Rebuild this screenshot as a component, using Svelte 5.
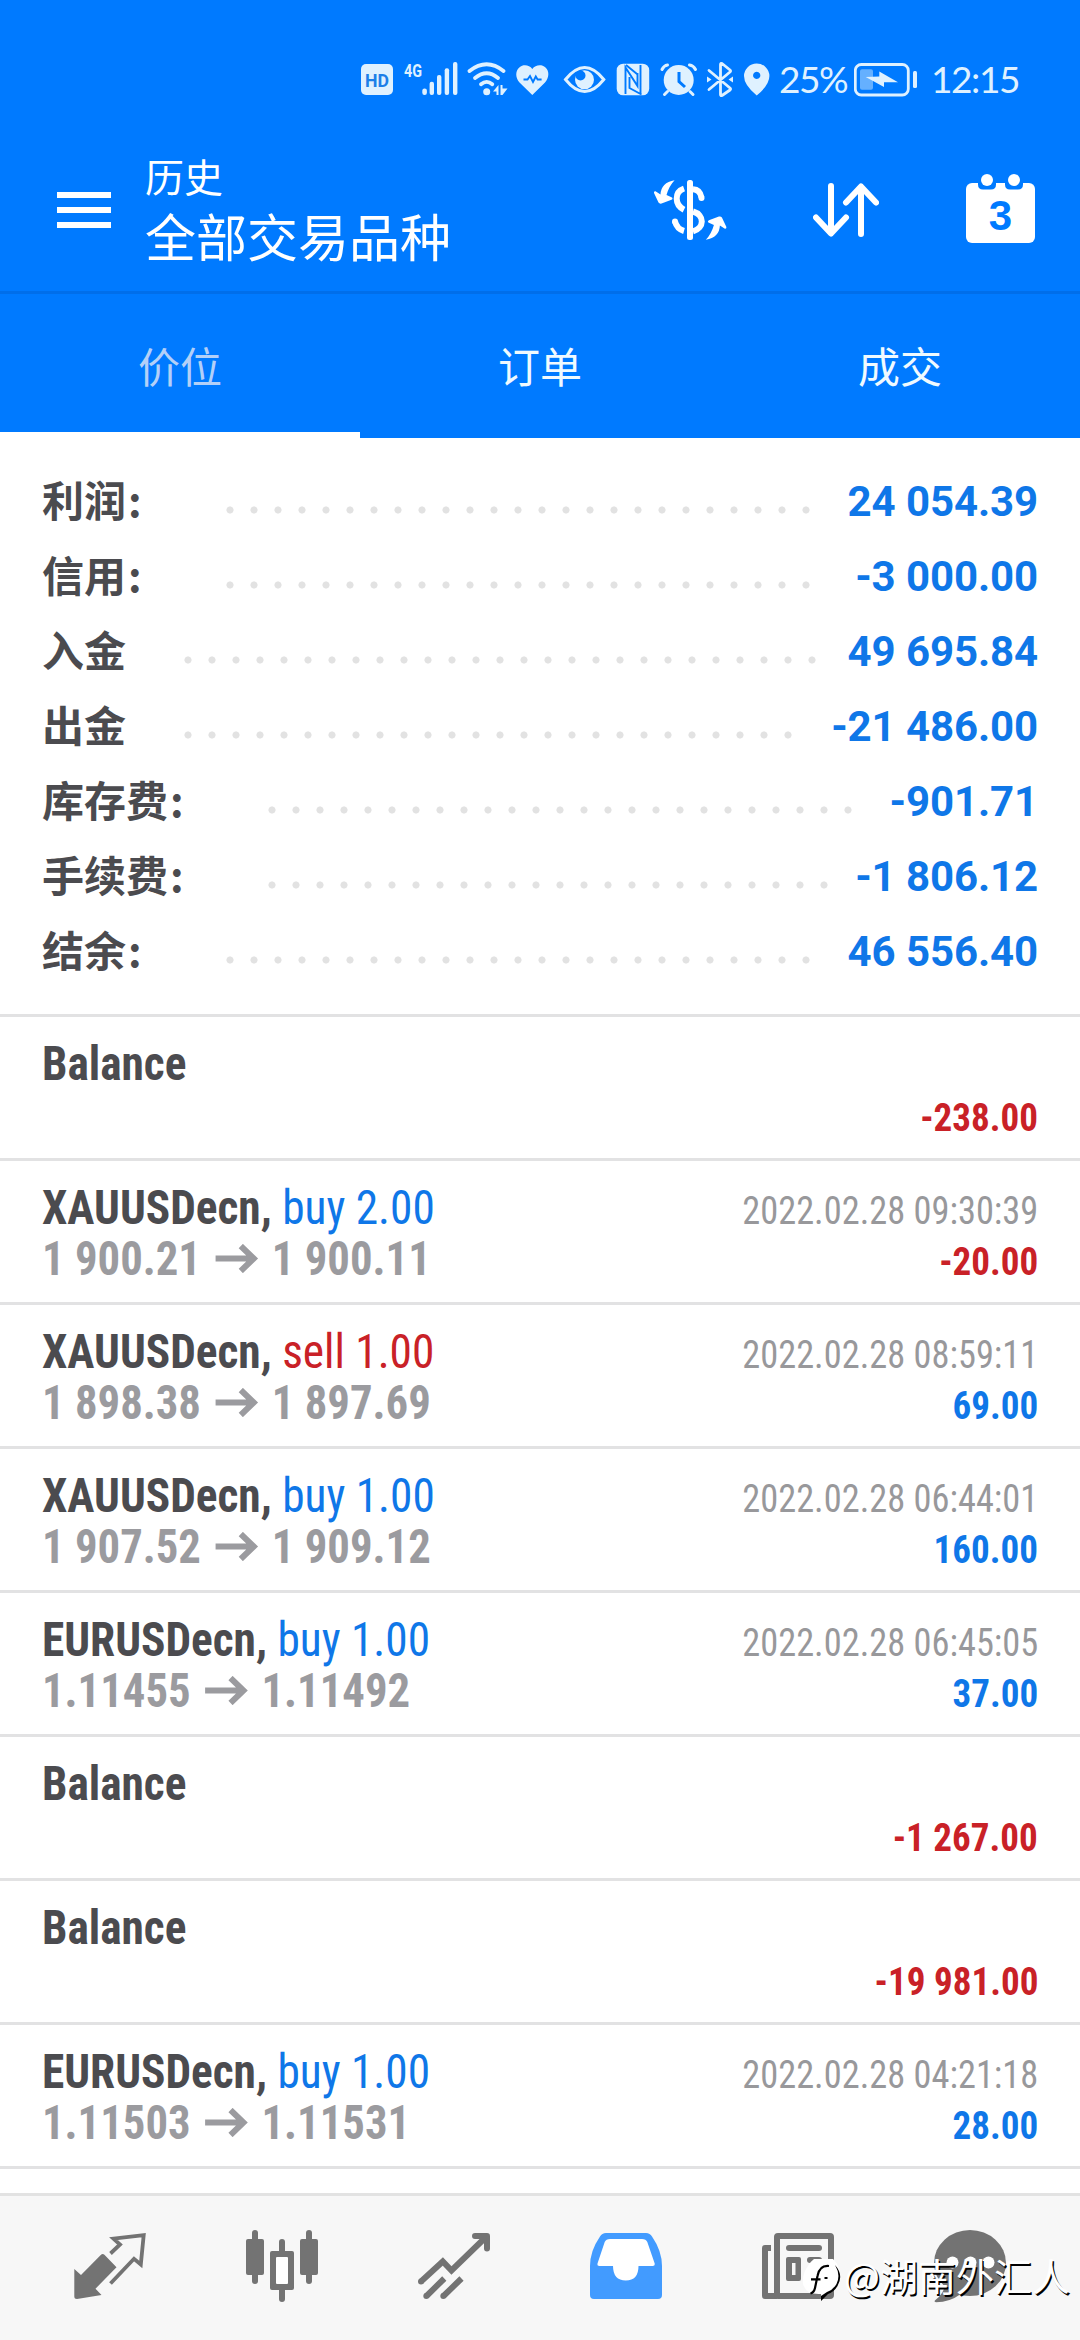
<script lang="ts">
	type Deal = {
		symbol?: string;
		side?: 'buy' | 'sell';
		volume?: string;
		open?: string;
		close?: string;
		time?: string;
		profit: string;
	};

	const tabs = ['价位', '订单', '成交'];
	let activeTab = $state(0);

	// dots = number of leader dots between label and value
	const summary = [
		{ label: '利润', colon: true, value: '24 054.39', dots: 25 },
		{ label: '信用', colon: true, value: '-3 000.00', dots: 25 },
		{ label: '入金', colon: false, value: '49 695.84', dots: 27 },
		{ label: '出金', colon: false, value: '-21 486.00', dots: 26 },
		{ label: '库存费', colon: true, value: '-901.71', dots: 25 },
		{ label: '手续费', colon: true, value: '-1 806.12', dots: 24 },
		{ label: '结余', colon: true, value: '46 556.40', dots: 25 }
	];

	const deals: Deal[] = [
		{ profit: '-238.00' },
		{ symbol: 'XAUUSDecn', side: 'buy', volume: '2.00', open: '1 900.21', close: '1 900.11', time: '2022.02.28 09:30:39', profit: '-20.00' },
		{ symbol: 'XAUUSDecn', side: 'sell', volume: '1.00', open: '1 898.38', close: '1 897.69', time: '2022.02.28 08:59:11', profit: '69.00' },
		{ symbol: 'XAUUSDecn', side: 'buy', volume: '1.00', open: '1 907.52', close: '1 909.12', time: '2022.02.28 06:44:01', profit: '160.00' },
		{ symbol: 'EURUSDecn', side: 'buy', volume: '1.00', open: '1.11455', close: '1.11492', time: '2022.02.28 06:45:05', profit: '37.00' },
		{ profit: '-1 267.00' },
		{ profit: '-19 981.00' },
		{ symbol: 'EURUSDecn', side: 'buy', volume: '1.00', open: '1.11503', close: '1.11531', time: '2022.02.28 04:21:18', profit: '28.00' }
	];
</script>

<div class="screen">
	<div class="status">
		<svg class="status-icons" width="412" height="40" viewBox="360 60 412 40" fill="currentColor">
			<!-- HD -->
			<rect x="361" y="64" width="32" height="31" rx="5" />
			<text x="377" y="86.5" class="hd" text-anchor="middle" textLength="24" lengthAdjust="spacingAndGlyphs">HD</text>
			<!-- 4G + signal -->
			<text x="404" y="76.5" class="net" textLength="18" lengthAdjust="spacingAndGlyphs">4G</text>
			<rect x="422.3" y="88.5" width="4.6" height="6.5" rx="2.2" />
			<rect x="429.6" y="81.7" width="4.4" height="13.3" rx="2" />
			<rect x="437" y="75" width="4.4" height="20" rx="2" />
			<rect x="444.7" y="68.3" width="4.4" height="26.7" rx="2" />
			<rect x="453" y="62" width="4.4" height="33" rx="2" />
			<!-- wifi -->
			<g fill="none" stroke="currentColor" stroke-width="3.8" stroke-linecap="round">
				<path d="M469.5 71Q486.7 57.5 503.5 71" />
				<path d="M475 78Q486.7 68.5 498 78" />
				<path d="M481 84.2Q486.7 79.5 492.3 84.2" />
			</g>
			<circle cx="486.7" cy="91.7" r="3.5" />
			<path d="M493 91.5L498.5 85v10h-2v-3.5zM500.5 85h2v3.5h5L502.5 95h-2z" />
			<!-- health -->
			<path d="M532.3 95L519.5 82.5C515.5 78 515 71 519.3 67.4 523.5 64 529.3 65 532.3 69 535.3 65 541.3 64 545.5 67.4 549.7 71 549 78 545 82.5z" />
			<path class="cut" d="M523.5 79.5h4l2.5-3.5 3 6 2.8-5.5 1.8 3h4" stroke-width="1.9" />
			<!-- eye -->
			<path d="M565.5 79.5Q584.7 55.5 603.8 79.5Q584.7 103.5 565.5 79.5z" fill="none" stroke="currentColor" stroke-width="3" />
			<circle cx="584.5" cy="79.7" r="9.5" />
			<circle cx="580.5" cy="75.5" r="5" class="bg" />
			<!-- nfc -->
			<rect x="616.7" y="63.7" width="32.5" height="31.6" rx="6.5" />
			<path class="cut" d="M625.5 94V67.5L637.5 86V73M629.5 77V88L641.5 94.5M626 65L637 74M640.5 65V93.5" stroke-width="1.9" />
			<!-- alarm -->
			<circle cx="678.7" cy="80" r="15" />
			<path d="M662 69.5Q664 65.5 667.5 65M689.5 65Q693.5 65.5 695.5 69.5M667.5 91.5L664.5 94.5M690 91.5L693 94.5" fill="none" stroke="currentColor" stroke-width="3" stroke-linecap="round" />
			<path class="cut" d="M679 72v9.5l6 5.5" stroke-width="3" />
			<!-- bluetooth -->
			<path d="M709 70.5L730 88Q731 89 730 90L722 95.5Q720.5 96.2 720.5 94.5V64.5Q720.5 62.8 722 63.5L730 70Q731 71 730 72L709 89.5" fill="none" stroke="currentColor" stroke-width="2.8" stroke-linecap="round" stroke-linejoin="round" />
			<path d="M707 76.5l4.5 3-4.5 3zM733 76.5l-4.5 3 4.5 3z" />
			<!-- location -->
			<path fill-rule="evenodd" d="M756.7 95.5Q744 85 744 76A12.7 12.5 0 0 1 769.4 76Q769.4 85 756.7 95.5zM756.7 71.8a3.6 3.6 0 1 0 .01 0z" />
		</svg>
		<span class="battery-text">25%</span>
		<svg class="battery" width="64" height="34" viewBox="854 63 64 34" fill="currentColor">
			<rect x="855.3" y="64.5" width="53" height="30.5" rx="6" fill="none" stroke="currentColor" stroke-width="2.8" />
			<rect x="860" y="69.3" width="13" height="20.5" rx="2" opacity=".45" />
			<path d="M865.7 77L879.3 76.5V71.5L898 82.3H884V87z" />
			<rect x="913" y="71" width="4" height="17" rx="1.5" />
		</svg>
		<span class="clock">12:15</span>
	</div>

	<header>
		<svg class="menu" width="54" height="36" viewBox="0 0 54 36" fill="#fff">
			<path d="M0 0h54v6H0zM0 15h54v6H0zM0 30h54v6H0z" />
		</svg>
		<div class="titles">
			<div class="sub">历史</div>
			<div class="title">全部交易品种</div>
		</div>
		<svg class="currency" width="73" height="60" viewBox="654 180 73 60">
			<rect x="687" y="180" width="6" height="60" rx="2.5" fill="#fff" />
			<g fill="none" stroke="#fff" stroke-width="6">
				<path d="M684 188.5C674 192 674.5 205 684 209.7" />
				<path d="M693 189.2Q700 189.5 701.5 197.5" />
				<path d="M693 211.5C705 215 704.5 228 693 231.3" />
				<path d="M684 231Q677 229 675 221.5" />
			</g>
			<circle cx="701.5" cy="198" r="3" fill="#fff" />
			<circle cx="675" cy="221.5" r="3" fill="#fff" />
			<path id="swap-arrow" d="M674.6 180.2Q661 182.5 660.5 194.5L655.5 191.3Q653.8 191 654 193L658.5 202.5Q659.5 204 661.5 203.5L671.5 199.8Q673.5 198.3 671.5 197.3L666.5 195Q669 186 674.6 180.2z" fill="#fff" />
			<use href="#swap-arrow" transform="rotate(180 690.2 210)" />
		</svg>
		<svg class="sort" width="66" height="54" viewBox="813 183 66 54" fill="none" stroke="#fff" stroke-width="6" stroke-linecap="round" stroke-linejoin="round">
			<path d="M831 186v47M816 217.5l15 16 15-16M861 234v-47M846 202.5l15-16 15 16" />
		</svg>
		<svg class="calendar" width="69" height="69" viewBox="966 174 69 69">
			<rect x="966" y="183" width="69" height="60" rx="6" fill="#fff" />
			<path class="bg" d="M978 182.5h18v2q0 5-5 5h-8q-5 0-5-5zM1005 182.5h18v2q0 5-5 5h-8q-5 0-5-5z" />
			<circle cx="987" cy="180" r="6" fill="#fff" />
			<circle cx="1014" cy="180" r="6" fill="#fff" />
			<text x="1000.5" y="230.3" text-anchor="middle" class="day">3</text>
		</svg>
	</header>

	<nav class="tabs">
		{#each tabs as tab, i}
			<button class="tab" class:active={i === activeTab} onclick={() => (activeTab = i)}>{tab}</button>
		{/each}
	</nav>

	<section class="summary">
		{#each summary as row}
			<div class="sum-row">
				<span class="label">{row.label}{#if row.colon}<span class="colon">:</span>{/if}</span>
				<span class="dots" style:width="{row.dots * 24}px"></span>
				<span class="value">{row.value}</span>
			</div>
		{/each}
	</section>

	<main>
		{#each deals as deal}
			<div class="deal">
				<div class="line">
					{#if deal.symbol}
						<div class="name">{deal.symbol}, <span class={deal.side}>{deal.side} {deal.volume}</span></div>
						<div class="time">{deal.time}</div>
					{:else}
						<div class="name">Balance</div>
					{/if}
				</div>
				<div class="line">
					{#if deal.symbol}
						<div class="prices">
							{deal.open}
							<svg width="46" height="29" viewBox="0 0 43 29" preserveAspectRatio="none" fill="none" stroke="currentColor" stroke-width="6">
								<path d="M0 14.5h38M25.5 2l13 12.5-13 12.5" />
							</svg>
							{deal.close}
						</div>
					{/if}
					<div class="profit" class:loss={deal.profit.startsWith('-')}>{deal.profit}</div>
				</div>
			</div>
		{/each}
	</main>

	<footer>
		<svg viewBox="0 0 72 72" fill="currentColor">
			<path d="M.3 39L7 45 27 24.8Q28.7 23 30.4 24.8L42.5 37.3 21.5 58.7 27.5 65 3 69Q.3 69 .3 66.5z" />
			<path d="M36.5 23.5L46 14.5 39.5 8.7 69.7 5.2 66.8 34.5 60 28.8 36.5 53.5" fill="none" stroke="currentColor" stroke-width="3.8" />
		</svg>
		<svg viewBox="0 0 72 72" fill="currentColor">
			<rect x="0" y="9" width="18" height="36" rx="2" />
			<rect x="6" y="0" width="6" height="54" rx="3" />
			<rect x="54" y="9" width="18" height="36" rx="2" />
			<rect x="60" y="0" width="6" height="54" rx="3" />
			<rect x="33" y="9" width="6" height="20" rx="3" />
			<rect x="33" y="54" width="6" height="18" rx="3" />
			<rect x="24" y="21" width="24" height="39" rx="2" />
			<rect x="30" y="27" width="12" height="27" rx="1" fill="#fff" />
		</svg>
		<svg viewBox="0 0 72 72" fill="none" stroke="currentColor" stroke-width="6">
			<path d="M3 51.5L24.8 31.5 33.5 40.5 69 6M8.5 66L26.3 48.5M25.5 66L43.5 48.5" />
			<path d="M57 6h12v12.5" stroke-linecap="round" stroke-linejoin="round" />
			<g fill="currentColor" stroke="none">
				<circle cx="3" cy="51.5" r="3" />
				<circle cx="8.3" cy="66" r="3" />
				<circle cx="25.3" cy="66" r="3" />
			</g>
		</svg>
		<svg class="current" viewBox="0 0 72 72" fill="currentColor">
			<path d="M16 3h40q4 0 6 3.5Q72 21 72 36v29q0 4-4 4H4q-4 0-4-4V36Q0 21 10 6.5 12 3 16 3z" />
			<path d="M20 9h32q4 0 5.3 3L64.7 33.5Q65 36 62.5 36H48.5q0 14.5-12.7 14.5T23 36H9.5Q7 36 7.5 33.5L14.7 12Q16 9 20 9z" fill="#fff" />
		</svg>
		<svg viewBox="0 0 72 72">
			<path d="M9 18H3v48h12" fill="none" stroke="currentColor" stroke-width="6" stroke-linejoin="round" />
			<rect x="15" y="6" width="54" height="60" rx="1" fill="none" stroke="currentColor" stroke-width="6" />
			<g fill="currentColor">
				<rect x="24" y="15" width="36" height="6" rx="3" />
				<path fill-rule="evenodd" d="M26 27h11q2 0 2 2v20q0 2-2 2H26q-2 0-2-2V29q0-2 2-2zM30 33v12h3.5V33z" />
				<rect x="45" y="27" width="15" height="6" rx="3" />
				<rect x="45" y="45" width="15" height="6" rx="3" />
			</g>
		</svg>
		<svg viewBox="0 0 72 72" fill="currentColor">
			<path d="M10.5 57.5Q8 65 2 69.5-1 71.5 2 72.3 16 72 26 64.5z" />
			<ellipse cx="36" cy="33" rx="36" ry="33" />
			<g fill="#fff">
				<circle cx="18.5" cy="32.5" r="6" />
				<circle cx="36.5" cy="32.5" r="6" />
				<circle cx="54.5" cy="32.5" r="6" />
			</g>
		</svg>
	</footer>

	<div class="watermark">
		<svg width="40" height="46" viewBox="0 0 40 46">
			<path d="M12 3H31Q38 10 38 18 37 33 26 37L19 44V38Q4 39 1 28 0 18 6 10 9 5 12 3z" fill="#fff" />
			<path d="M27 10Q17.5 9 15.5 20L13 32Q12 36.5 8.5 37.5M9 23.3h9.5M22.5 22h3" fill="none" stroke="#000" stroke-width="2.2" />
			<path d="M33 9Q42 19 35.500 30 32 36 26 38L19 45V40L25 36Q31 34 34.500 28 39 19 33 9z" fill="#000" />
		</svg>
		<span>@湖南外汇人</span>
	</div>
</div>

<style>
	:global(body) {
		margin: 0;
		background: #fff;
	}

	.screen {
		position: relative;
		display: flex;
		flex-direction: column;
		width: 1080px;
		height: 2340px;
		overflow: hidden;
		background: #fff;
		font-family: Roboto, 'Noto Sans CJK SC', sans-serif;
		color: #4b4b4f;
	}
	svg {
		display: block;
		flex: none;
	}

	/* status bar */
	.status {
		box-sizing: border-box;
		display: flex;
		align-items: center;
		height: 126px;
		padding: 34px 0 0 360px;
		background: #007aff;
		color: #dff1ff;
		font-family: Lato, sans-serif;
		font-size: 37px;
		white-space: nowrap;
	}
	.battery-text {
		width: 74px;
		margin-left: 7px;
		padding-bottom: 3px;
		letter-spacing: -1.5px;
	}
	.battery {
		margin-left: 1px;
	}
	.clock {
		margin-left: 13px;
		padding-bottom: 3px;
		letter-spacing: -1.4px;
	}
	.hd {
		font: 700 18px Roboto, sans-serif;
		fill: #1c7fe8;
	}
	.net {
		font: 700 19px Roboto, sans-serif;
	}
	.cut {
		fill: none;
		stroke: #007aff;
	}
	.bg {
		fill: #007aff;
	}

	/* toolbar */
	header {
		box-sizing: border-box;
		display: flex;
		align-items: center;
		height: 168px;
		padding: 3px 0 0 57px;
		background: #007aff;
		border-bottom: 3px solid #006eea;
		color: #fff;
	}
	.titles {
		width: 509px;
		margin-left: 34px;
		padding-top: 5px;
	}
	.sub {
		font-size: 39px;
		line-height: 54px;
	}
	.title {
		font-size: 51px;
		line-height: 67px;
	}
	.sort {
		margin-left: 86px;
	}
	.calendar {
		margin: -3px 0 0 87px;
	}
	.day {
		font: bold 42px 'Liberation Sans', sans-serif;
		fill: #007aff;
	}

	.tabs {
		display: flex;
		height: 144px;
		background: #007aff;
	}
	.tab {
		box-sizing: border-box;
		flex: 1;
		padding: 3px 0 0;
		border: 0;
		border-bottom: 6px solid transparent;
		background: none;
		color: #f0faff;
		font: 400 42px Roboto, 'Noto Sans CJK SC', sans-serif;
	}
	.tab.active {
		border-bottom-color: #fff;
		color: #b3d0f8;
	}

	/* account totals */
	.summary {
		height: 549px;
		padding: 27px 42px 0;
	}
	.sum-row {
		display: flex;
		align-items: center;
		height: 75px;
		font-size: 42px;
		font-weight: 700;
		white-space: nowrap;
	}
	.label {
		padding-bottom: 8px;
	}
	.colon {
		display: inline-block;
		box-sizing: border-box;
		width: 42px;
		padding-left: 2px;
		font-family: 'Noto Sans CJK SC', sans-serif;
		line-height: 1;
	}
	.dots {
		height: 8px;
		margin: 14px 0 0 50px;
		background: radial-gradient(circle at 12px 4px, #e2e2e2 3.2px, transparent 3.9px) 0 0 / 24px 8px repeat-x;
	}
	.value {
		margin-left: auto;
		padding-bottom: 2px;
		color: #0f77e8;
		letter-spacing: -0.1px;
	}

	/* history list */
	.deal {
		box-sizing: border-box;
		height: 144px;
		padding: 21px 42px 0;
		border-top: 3px solid #e2e2e3;
		font-family: 'Roboto Condensed', Roboto, sans-serif;
		font-stretch: 75%;
		white-space: nowrap;
	}
	.deal:last-child {
		height: 147px;
		border-bottom: 3px solid #e2e2e3;
	}
	.line {
		display: flex;
		align-items: baseline;
		height: 51px;
		line-height: 51px;
	}
	/* keeps the baseline of the tall text on rows without prices */
	.line::before {
		content: '\200b';
		font-size: 48px;
	}
	.name,
	.prices {
		font-size: 48px;
		font-weight: 700;
		transform: scaleX(0.932);
		transform-origin: left;
	}
	.name {
		transform: scaleX(0.944);
	}
	.buy,
	.sell {
		font-weight: 400;
		color: #0f77e8;
	}
	.sell {
		color: #c92127;
	}
	.time {
		margin-left: auto;
		color: #98989b;
		font-size: 39px;
		transform: scaleX(0.933);
		transform-origin: right;
	}
	.prices {
		display: flex;
		align-items: center;
		gap: 15px;
		color: #9b9b9f;
	}
	.profit {
		margin-left: auto;
		color: #0f77e8;
		font-size: 39px;
		font-weight: 700;
		transform: scaleX(0.95);
		transform-origin: right;
	}
	.profit.loss {
		color: #c92127;
	}

	footer {
		box-sizing: border-box;
		display: flex;
		gap: 100px;
		height: 147px;
		margin-top: auto;
		padding: 34px 74px 0;
		border-top: 3px solid #e2e2e2;
		background: #f7f7f7;
		color: #737373;
	}
	footer svg {
		width: 72px;
		height: 72px;
		overflow: visible;
	}
	.current {
		color: #429bff;
	}

	.watermark {
		position: absolute;
		left: 802px;
		bottom: 36px;
		display: flex;
		align-items: center;
		gap: 2px;
		color: #fff;
		font-family: 'Noto Sans CJK SC', sans-serif;
		font-size: 38px;
		line-height: 42px;
		white-space: nowrap;
		text-shadow: 1.5px 1.5px 0 #000;
	}
	.watermark span {
		padding-bottom: 8px;
	}
</style>
